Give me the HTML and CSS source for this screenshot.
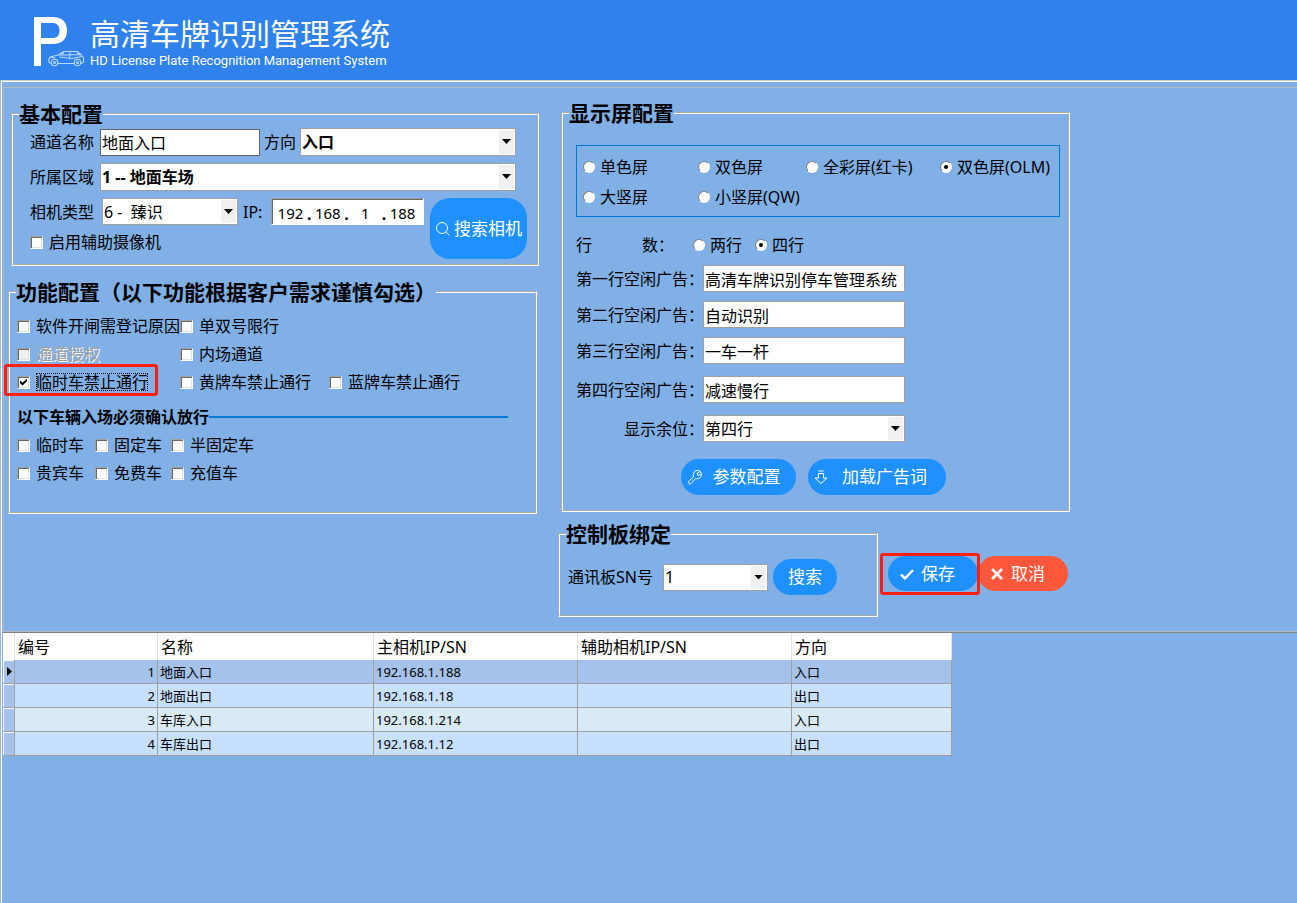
FILE: index.html
```html
<!DOCTYPE html>
<html lang="zh-CN">
<head>
<meta charset="utf-8">
<title>高清车牌识别管理系统</title>
<link rel="stylesheet" href="styles.css">
</head>
<body>
<header class="banner">
  <svg class="logo" viewBox="0 0 52 52" aria-hidden="true">
    <path fill="#fff" fill-rule="evenodd" d="M0 1H19C28 1 33 6 33 14.500C33 23 28 28 19 28H7V50H0ZM7 7V22H18C23 22 25.500 19.500 25.500 14.500C25.500 9.500 23 7 18 7Z"/>
    <g fill="none" stroke="#b9d7fa" stroke-width="1.100" stroke-linejoin="round" stroke-linecap="round">
      <path d="M17 47H15.500L14.500 44L16 41L24 39L30 35.500H43L47 38.500L49.500 41.500V46L47 47.500M23.500 47.500H40.500M24 39L47 38.500M30 35.500L28 39M36 35.500L35.500 43M43 35.500L44.500 38.500M26 41L38 42.500L48 40.500M16 41L21 42"/>
      <circle cx="20.500" cy="46.500" r="3.200"/><circle cx="43.500" cy="46.500" r="3.200"/>
      <circle cx="20.500" cy="46.500" r="1"/><circle cx="43.500" cy="46.500" r="1"/>
    </g>
  </svg>
  <div>
    <h1 class="banner-title">高清车牌识别管理系统</h1>
    <p class="banner-sub">HD License Plate Recognition Management System</p>
  </div>
</header>
<main class="frame">
  <form class="workspace">
    <div class="col col-left">
      <fieldset class="group basic">
        <legend>基本配置</legend>
        <div class="row basic-row">
          <label class="tag" for="channel">通道名称</label>
          <input class="text dark" id="channel" type="text" value="地面入口">
          <label for="dir">方向</label>
          <span class="select grow bold"><select id="dir"><option>入口</option><option>出口</option></select></span>
        </div>
        <div class="row basic-row">
          <label class="tag" for="area">所属区域</label>
          <span class="select grow bold"><select id="area"><option>1 -- 地面车场</option></select></span>
        </div>
        <div class="camera">
          <div class="camera-fields">
            <div class="row">
              <label class="tag" for="camera">相机类型</label>
              <span class="select camera-type"><select id="camera"><option>6 -&nbsp; 臻识</option></select></span>
              <label class="ip-label" for="ip1">IP:</label>
              <span class="ip"><input id="ip1" type="text" value="192" aria-label="IP 1"><i>.</i><input type="text" value="168" aria-label="IP 2"><i>.</i><input type="text" value="1" aria-label="IP 3"><i>.</i><input type="text" value="188" aria-label="IP 4"></span>
            </div>
            <label class="choice"><input type="checkbox"><span>启用辅助摄像机</span></label>
          </div>
          <button class="btn search-camera" type="button">
            <svg viewBox="0 0 16 16" aria-hidden="true"><circle cx="7" cy="7" r="5.500"/><path d="M11 11L14.500 14.500"/></svg>搜索相机</button>
        </div>
      </fieldset>

      <fieldset class="group features">
        <legend>功能配置（以下功能根据客户需求谨慎勾选）</legend>
        <div class="feature-grid">
          <label class="choice"><input type="checkbox"><span>软件开闸需登记原因</span></label>
          <label class="choice"><input type="checkbox"><span>单双号限行</span></label>
          <span></span>
          <label class="choice"><input type="checkbox" disabled><span>通道授权</span></label>
          <label class="choice"><input type="checkbox"><span>内场通道</span></label>
          <span></span>
          <label class="choice focused marked-check"><input type="checkbox" checked><span>临时车禁止通行</span></label>
          <label class="choice"><input type="checkbox"><span>黄牌车禁止通行</span></label>
          <label class="choice"><input type="checkbox"><span>蓝牌车禁止通行</span></label>
        </div>
        <h2 class="sub">以下车辆入场必须确认放行</h2>
        <div class="car-grid">
          <label class="choice"><input type="checkbox"><span>临时车</span></label>
          <label class="choice"><input type="checkbox"><span>固定车</span></label>
          <label class="choice"><input type="checkbox"><span>半固定车</span></label>
          <label class="choice"><input type="checkbox"><span>贵宾车</span></label>
          <label class="choice"><input type="checkbox"><span>免费车</span></label>
          <label class="choice"><input type="checkbox"><span>充值车</span></label>
        </div>
      </fieldset>
    </div>

    <div class="col col-right">
      <fieldset class="group display">
        <legend>显示屏配置</legend>
        <div class="screens">
          <label class="choice"><input type="radio" name="screen"><span>单色屏</span></label>
          <label class="choice"><input type="radio" name="screen"><span>双色屏</span></label>
          <label class="choice"><input type="radio" name="screen"><span>全彩屏(红卡)</span></label>
          <label class="choice"><input type="radio" name="screen" checked><span>双色屏(OLM)</span></label>
          <label class="choice"><input type="radio" name="screen"><span>大竖屏</span></label>
          <label class="choice"><input type="radio" name="screen"><span>小竖屏(QW)</span></label>
        </div>
        <div class="row lines">
          <span class="lines-tag"><span>行</span><span>数：</span></span>
          <label class="choice"><input type="radio" name="lines"><span>两行</span></label>
          <label class="choice"><input type="radio" name="lines" checked><span>四行</span></label>
        </div>
        <div class="ads">
          <label for="ad1">第一行空闲广告：</label><input class="text" id="ad1" type="text" value="高清车牌识别停车管理系统">
          <label for="ad2">第二行空闲广告：</label><input class="text" id="ad2" type="text" value="自动识别">
          <label for="ad3">第三行空闲广告：</label><input class="text" id="ad3" type="text" value="一车一杆">
        </div>
        <div class="ads ads-loose">
          <label for="ad4">第四行空闲广告：</label><input class="text" id="ad4" type="text" value="减速慢行">
          <label class="short" for="spaces">显示余位：</label><span class="select"><select id="spaces"><option>第四行</option></select></span>
        </div>
        <div class="row display-actions">
          <button class="btn params" type="button">
            <svg viewBox="0 0 16 16" aria-hidden="true"><path d="M2 14.500C1 13.500 1.500 12.500 2.500 11.500L6.500 8C5.500 5 7 2 10 1.500C12.500 1.200 14.500 3 14.500 5.500C14.500 8.500 11.500 10.500 8.500 9.500L5 13.500C4 14.800 3 15.200 2 14.500ZM13 2.500L10 4.500L11 6.500L14.300 5"/></svg>参数配置</button>
          <button class="btn load" type="button">
            <svg viewBox="0 0 16 16" aria-hidden="true"><path d="M5.500 2H10.500M5.500 4.500H10.500V9H14L8 14.500L2 9H5.500Z"/></svg>加载广告词</button>
        </div>
      </fieldset>

      <div class="bottom">
        <fieldset class="group board">
          <legend>控制板绑定</legend>
          <div class="row board-row">
            <label class="board-tag" for="sn">通讯板SN号</label>
            <span class="select sn"><select id="sn"><option>1</option></select></span>
            <button class="btn find" type="button">搜索</button>
          </div>
        </fieldset>
        <div class="commit">
          <span class="marked-save"><button class="btn save" type="button">
            <svg viewBox="0 0 16 16" aria-hidden="true"><path d="M2 8.500L6 12.500L14 4"/></svg>保存</button></span>
          <button class="btn cancel" type="button">
            <svg viewBox="0 0 16 16" aria-hidden="true"><path d="M3 3L13 13M13 3L3 13"/></svg>取消</button>
        </div>
      </div>
    </div>
  </form>

  <div class="listing">
    <table class="channels">
      <colgroup><col class="c-mark"><col class="c-id"><col class="c-name"><col class="c-main"><col class="c-aux"><col class="c-dir"></colgroup>
      <thead><tr><th></th><th>编号</th><th>名称</th><th>主相机IP/SN</th><th>辅助相机IP/SN</th><th>方向</th></tr></thead>
      <tbody>
        <tr class="current"><td></td><td>1</td><td>地面入口</td><td>192.168.1.188</td><td></td><td>入口</td></tr>
        <tr><td></td><td>2</td><td>地面出口</td><td>192.168.1.18</td><td></td><td>出口</td></tr>
        <tr><td></td><td>3</td><td>车库入口</td><td>192.168.1.214</td><td></td><td>入口</td></tr>
        <tr><td></td><td>4</td><td>车库出口</td><td>192.168.1.12</td><td></td><td>出口</td></tr>
      </tbody>
    </table>
  </div>
</main>
</body>
</html>
```
FILE: styles.css
```css
* { box-sizing: border-box; }

body {
  margin: 0;
  min-height: 100vh;
  display: flex;
  flex-direction: column;
  background: #80b0e6;
  color: #000;
  font: 16px/20px "Noto Sans", "Noto Sans CJK SC", sans-serif;
}

input, select, button { font: inherit; color: inherit; margin: 0; }

/* Banner */
.banner {
  display: flex;
  align-items: flex-start;
  gap: 4px;
  height: 80px;
  padding: 16px 34px 0;
  background: #2f82eb;
  color: #fff;
}
.logo { width: 52px; height: 52px; }
.banner-title { margin: 0; font-size: 30px; line-height: 36px; font-weight: 400; }
.banner-sub { margin: 2px 0 0; font: 13px/14px Roboto, "Noto Sans", sans-serif; }

.frame {
  flex: 1;
  border-top: 1px solid #c8d0d8;
  border-left: 1px solid #a0b8d4;
  box-shadow: inset 1px 1px 0 #fff;
  padding: 6px 0 0 2px;
}

/* Form area */
.workspace {
  display: grid;
  grid-template-columns: minmax(0, 531px) minmax(0, 512px);
  column-gap: 19px;
  padding: 15px 0 14px 4px;
  border: solid #b4b8bc;
  border-width: 1px 0 1px 1px;
}
.col { display: flex; flex-direction: column; }
.col-left { gap: 16px; padding-top: 1px; }
.col-right { gap: 12px; }

.group { min-width: 0; margin: 0; padding: 0; border: 2px groove #fff; }
.group legend {
  padding: 0;
  font-size: 21px;
  line-height: 20px;
  font-weight: 700;
  white-space: nowrap;
}
.row { display: flex; align-items: center; }
label, .lines-tag { white-space: nowrap; }

/* Text boxes and drop-downs */
.text {
  height: 27px;
  min-width: 0;
  padding: 0 1px;
  border: 1px solid #a0a0a0;
  background: #fff;
}
.text.dark { border-color: #646464; width: 160px; }
.select { position: relative; display: flex; height: 27px; }
.select select {
  width: 100%;
  appearance: none;
  padding: 0 20px 0 1px;
  border: 1px solid #a0a0a0;
  border-radius: 0;
  background: #fff;
}
.select::before, .select::after { content: ""; position: absolute; pointer-events: none; }
.select::before { top: 2px; right: 2px; bottom: 2px; width: 15px; background: #f0f0f0; }
.select::after {
  top: 11px;
  right: 5px;
  width: 9px;
  height: 5px;
  background: #000;
  clip-path: polygon(0 0, 100% 0, 50% 100%);
}
.select.bold { font-weight: 700; height: 28px; }
.grow { flex: 1; }

/* Tick boxes and radios */
.choice { display: flex; align-items: center; gap: 6px; }
.choice input {
  position: relative;
  flex: none;
  appearance: none;
  width: 13px;
  height: 13px;
  background: #fff;
}
.choice input[type="checkbox"] {
  border: 1px solid;
  border-color: #a0a0a0 #fff #fff #a0a0a0;
  box-shadow: inset 1px 1px 0 #696969, inset -1px -1px 0 #e3e3e3;
}
.choice input[type="radio"] {
  width: 12px;
  height: 12px;
  border: 1px solid;
  border-color: #808080 #fff #fff #808080;
  border-radius: 50%;
}
.choice input:checked::before { content: ""; position: absolute; background: #000; }
.choice input[type="checkbox"]:checked::before {
  inset: 2px;
  clip-path: polygon(0 30%, 36% 62%, 100% 0, 100% 38%, 36% 100%, 0 68%);
}
.choice input[type="radio"]:checked::before { inset: 3px; border-radius: 50%; }
.choice input:disabled { background: #f0f0f0; }
.choice input:disabled + span { color: #a0a0a0; text-shadow: 1px 1px 0 #fff; }
.focused span { outline: 1px dotted #000; outline-offset: -1px; line-height: 18px; }

/* Buttons */
.btn {
  display: flex;
  align-items: center;
  justify-content: center;
  height: 36px;
  padding: 0;
  border: 0;
  border-radius: 18px;
  background: #1e90ff;
  color: #fff;
  font-size: 17px;
  white-space: nowrap;
}
.btn svg { flex: none; width: 16px; height: 16px; fill: none; stroke: currentColor; stroke-width: 1; }

/* Basic settings */
.basic { margin-left: 3px; padding-left: 17px; }
.basic legend { margin-left: -11px; }
.basic-row { gap: 4px; margin: 4px 21px 7px 0; }
.tag { width: 66px; }
.camera { display: flex; gap: 6px; margin-right: 10px; padding-bottom: 5px; }
.camera-fields { flex: 1; min-width: 0; display: flex; flex-direction: column; gap: 7px; }
.camera-type { width: 136px; margin-left: 6px; }
.ip-label { width: 28px; margin-left: 5px; }
.ip {
  flex: 1;
  min-width: 0;
  display: flex;
  align-items: flex-end;
  height: 27px;
  padding: 0 4px 0 2px;
  background: #fff;
  border: 1px solid;
  border-color: #a0a0a0 #fff #fff #a0a0a0;
  box-shadow: inset 1px 1px 0 #696969;
}
.ip input {
  flex: 1;
  width: 0;
  min-width: 0;
  height: 22px;
  padding: 0;
  border: 0;
  background: none;
  text-align: center;
  font-size: 15px;
}
.ip i { font-style: normal; font-weight: 700; }
.search-camera { width: 97px; height: 61px; border-radius: 20px; gap: 3px; }

/* Features */
.features { margin-right: 2px; padding: 0 0 25px 7px; }
.features legend { margin-left: -1px; }
.feature-grid, .car-grid { display: grid; grid-auto-rows: 28px; }
.feature-grid { grid-template-columns: 163px 149px auto; padding-top: 10px; }
.car-grid { grid-template-columns: 78px 76px auto; }
.sub {
  display: flex;
  align-items: center;
  margin: 9px 27px 2px 0;
  font-size: 16px;
  line-height: 24px;
  white-space: nowrap;
}
.sub::after { content: ""; flex: 1; height: 2px; background: #0078d7; }

/* Red call-out frames */
.marked-check, .marked-save { position: relative; }
.marked-check::after, .marked-save::after {
  content: "";
  position: absolute;
  border: 3px solid #ff2010;
  border-radius: 3px;
  pointer-events: none;
}
.marked-check::after { inset: -4px 22px 0 -13px; }
.marked-save::after { inset: -3px -2px -4px -8px; }

/* Display settings */
.display { margin-left: 3px; padding: 0 8px 15px 13px; }
.display legend { margin-left: -7px; }
.display .choice { gap: 5px; }
.screens {
  display: grid;
  grid-template-columns: 115px 108px 134px auto;
  grid-auto-rows: 30px;
  margin-top: 22px;
  padding: 6px 0 4px 6px;
  border: 1px solid #0078d7;
}
.lines { gap: 13px; height: 48px; padding-top: 8px; }
.lines-tag { display: flex; justify-content: space-between; width: 98px; margin-right: 6px; }
.ads {
  display: grid;
  grid-template-columns: 127px minmax(0, 202px);
  grid-auto-rows: 27px;
  align-items: center;
  row-gap: 9px;
}
.ads-loose { row-gap: 12px; margin-top: 12px; }
.short { padding-left: 48px; }
.display-actions { gap: 12px; margin-top: 17px; padding-left: 105px; }
.params { width: 115px; gap: 10px; padding-right: 10px; }
.load { width: 138px; gap: 13px; padding-right: 14px; }

/* Control board */
.bottom { display: flex; align-items: flex-start; gap: 10px; }
.board { width: 320px; padding: 0 0 20px 8px; }
.board legend { margin-left: -2px; }
.board-row { padding-top: 15px; }
.board-tag { width: 95px; }
.sn { width: 105px; margin-right: 5px; }
.find { width: 64px; }
.commit { display: flex; padding-top: 32px; }
.commit .btn { height: 35px; width: 90px; gap: 6px; padding-right: 12px; }
.commit .btn svg { stroke-width: 2.500; }
.commit .cancel { background: #ff573c; }

/* Channel table */
.listing { border-top: 1px solid #808080; }
.channels {
  width: 949px;
  table-layout: fixed;
  border-collapse: separate;
  border-spacing: 0;
  font-size: 13px;
}
.c-mark { width: 12px; }
.c-id { width: 143px; }
.c-name { width: 216px; }
.c-main { width: 204px; }
.c-aux { width: 214px; }
.channels th {
  height: 27px;
  padding: 0 3px;
  background: #fff;
  border-right: 1px solid #e3e3e3;
  text-align: left;
  font-size: 16px;
  font-weight: 400;
}
.channels td {
  height: 24px;
  padding: 0 2px;
  background: #c8e0ff;
  border: solid #a0a0a0;
  border-width: 0 1px 1px 0;
}
.channels tr:nth-child(3) td { background: #d8eaf5; }
.channels .current td { background: #a4c2ea; }
.channels tr td:first-child { background: #a4c2ea; box-shadow: inset 1px 1px 0 #fff; }
.channels td:nth-child(2) { text-align: right; }
.current td:first-child::before {
  content: "";
  display: block;
  width: 5px;
  height: 9px;
  margin-left: 2px;
  background: #000;
  clip-path: polygon(0 0, 100% 50%, 0 100%);
}
```
